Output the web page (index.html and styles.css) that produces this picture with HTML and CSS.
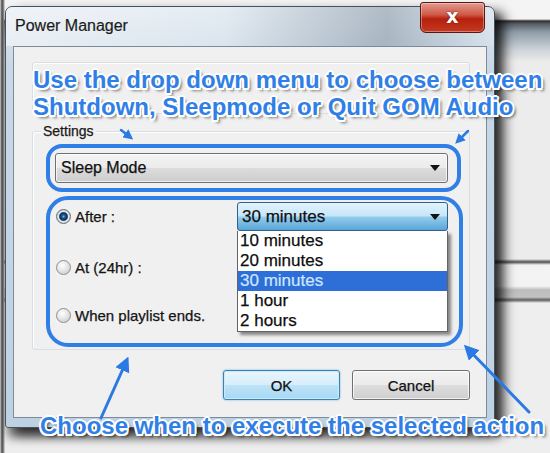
FILE: index.html
```html
<!DOCTYPE html>
<html lang="en">
<head>
    <meta charset="UTF-8">
    <title>Power Manager</title>
    <link rel="stylesheet" href="styles.css">
</head>
<body>
    <div class="desk">
        <div class="window">
            <div class="titlebar">
                <span class="title">Power Manager</span>
                <a class="close" href="javascript:;">x</a>
            </div>
            <div class="client">
                <div class="group upper"></div>
                <div class="group settings">
                    <span class="legend">Settings</span>
                    <div class="combo mode">
                        <span>Sleep Mode</span>
                        <i class="caret"></i>
                    </div>
                    <div class="options">
                        <div class="radios">
                            <label class="radio checked"><i></i>After :</label>
                            <label class="radio"><i></i>At (24hr) :</label>
                            <label class="radio"><i></i>When playlist ends.</label>
                        </div>
                        <div class="picker">
                            <div class="combo open">
                                <span>30 minutes</span>
                                <i class="caret"></i>
                            </div>
                            <ul class="list">
                                <li>10 minutes</li>
                                <li>20 minutes</li>
                                <li class="active">30 minutes</li>
                                <li>1 hour</li>
                                <li>2 hours</li>
                            </ul>
                        </div>
                    </div>
                </div>
                <div class="buttons">
                    <button class="btn default">OK</button>
                    <button class="btn">Cancel</button>
                </div>
            </div>
        </div>

        <!-- annotation marks drawn over the dialog -->
        <svg class="marks" width="550" height="453" viewBox="0 0 550 453">
            <defs>
                <marker id="head" viewBox="0 0 10 10" refX="6" refY="5" markerWidth="4" markerHeight="4" orient="auto">
                    <path d="M0 0L10 5L0 10z" fill="#2b79e2"/>
                </marker>
                <marker id="bighead" viewBox="0 0 10 10" refX="6" refY="5" markerWidth="5" markerHeight="5" orient="auto">
                    <path d="M0 0L10 5L0 10z" fill="#2b79e2"/>
                </marker>
            </defs>
            <g fill="none" stroke="#2f7fe6" stroke-width="4">
                <rect x="48" y="146" width="411" height="44" rx="14"/>
                <rect x="48" y="198" width="413" height="147" rx="20"/>
            </g>
            <g stroke="#2b79e2" stroke-width="2.5" stroke-linecap="round" marker-end="url(#head)">
                <line x1="121" y1="130" x2="130" y2="137"/>
                <line x1="468" y1="131" x2="458" y2="141"/>
            </g>
            <g stroke="#2b79e2" stroke-width="3" stroke-linecap="round" marker-end="url(#bighead)">
                <line x1="101" y1="418" x2="126" y2="362"/>
                <line x1="529" y1="412" x2="468" y2="349"/>
            </g>
        </svg>
        <p class="note top">Use the drop down menu to choose between<br>Shutdown, Sleepmode or Quit GOM Audio</p>
        <p class="note bottom">Choose when to execute the selected action</p>
    </div>
</body>
</html>
```

FILE: styles.css
```css
* {
    padding: 0;
    margin: 0;
    box-sizing: border-box;
}

body {
    width: 550px;
    height: 453px;
    overflow: hidden;
    font-family: "Liberation Sans", Arial, sans-serif;
    background: #e9e9e9;
}

/* desktop behind the dialog */
.desk {
    position: relative;
    width: 550px;
    height: 453px;
    padding: 6px 0 0 5px;
    background:
        linear-gradient(to right, #d8d8d8 0, #4a4a4a 2px, #9a9a9a 4px, transparent 5px),
        linear-gradient(to bottom, #f4f4f4 0, #f4f4f4 19px, #2e2e2e 21px, #5a5f66 24px, #8f9ca8 32px, #cdd4da 50px, #ececec 62px, #ececec 259px, #4e4e4e 262px, #f3f3f3 265px, #f3f3f3 286px, #bcbcbc 290px, #c4c4c4 297px, #5e5e5e 300px, #eeeeee 303px, #eeeeee 100%);
}

.window {
    width: 490px;
    height: 422px;
    padding: 0 7px 8px;
    border: 1px solid #46525e;
    border-radius: 7px 7px 3px 3px;
    background: linear-gradient(to bottom, #dfe8f0 0, #c9d8e6 60px, #bed1e3 100%);
    box-shadow: 9px 6px 12px rgba(0, 0, 0, .75), 2px 10px 10px rgba(0, 0, 0, .4);
}

.titlebar {
    display: flex;
    justify-content: space-between;
    align-items: flex-start;
    height: 39px;
    margin: 0 -7px;
    padding: 0 9px;
    background: linear-gradient(to right, rgba(255, 255, 255, .5) 0, rgba(255, 255, 255, .2) 45%, rgba(90, 105, 120, .35) 78%, rgba(255, 255, 255, .1) 100%);
    border-radius: 6px 6px 0 0;
}

.title {
    margin-top: 10px;
    font-size: 16px;
    line-height: 18px;
    color: #1c1c1c;
    -webkit-text-stroke: .2px #1c1c1c;
}

.close {
    width: 65px;
    height: 31px;
    margin-top: -5px;
    border: 1px solid #5b1610;
    border-radius: 3px 3px 6px 6px;
    background: linear-gradient(to bottom, #e29a8f 0, #cf5a48 40%, #b5200d 55%, #c43a22 100%);
    box-shadow: inset 0 0 0 1px rgba(255, 255, 255, .35);
    color: #fff;
    font: bold 19px/26px "DejaVu Sans", sans-serif;
    text-align: center;
    text-decoration: none;
    text-shadow: 0 0 2px #5b1610;
}

.client {
    height: 372px;
    padding: 15px 16px 0 18px;
    border: 1px solid #7b8b99;
    background: #f0f0f0;
    -webkit-text-stroke: .25px #111;
}

.group {
    border: 1px solid #d5dfe5;
    border-radius: 3px;
    box-shadow: inset 1px 1px 0 #fff;
}

.upper {
    height: 52px;
}

.settings {
    margin-top: 17px;
    padding: 0 21px 17px 22px;
}

.legend {
    display: block;
    width: fit-content;
    margin: -9px 0 0 -14px;
    padding: 0 2px;
    font-size: 14px;
    line-height: 16px;
    color: #1a1a1a;
    background: #f0f0f0;
}

.combo {
    display: flex;
    align-items: center;
    justify-content: space-between;
    border: 1px solid #707070;
    border-radius: 3px;
    color: #111;
}

.combo .caret {
    width: 0;
    height: 0;
    margin-right: 7px;
    border-left: 5px solid transparent;
    border-right: 5px solid transparent;
    border-top: 6px solid #111;
}

.mode {
    height: 30px;
    margin-top: 14px;
    padding-left: 5px;
    font-size: 16px;
    background: linear-gradient(to bottom, #f4f4f4 0, #ebebeb 50%, #dcdcdc 51%, #cdcdcd 100%);
    box-shadow: inset 0 0 0 1px rgba(255, 255, 255, .7);
}

.options {
    display: flex;
    margin-top: 19px;
}

.radios {
    width: 183px;
}

.radio {
    display: flex;
    align-items: center;
    gap: 4px;
    height: 29px;
    font-size: 15px;
    color: #151515;
}

.radio:nth-child(2) {
    margin-top: 22px;
}

.radio:nth-child(3) {
    margin-top: 19px;
}

.radio i {
    width: 15px;
    height: 15px;
    margin-left: 1px;
    border: 1px solid #8c8f91;
    border-radius: 50%;
    background: radial-gradient(circle at 40% 35%, #ffffff 0, #e6e6e6 45%, #c4c4c4 100%);
}

.radio.checked i {
    border-color: #5e7488;
    background: radial-gradient(circle 6.5px at 50% 50%, #73b8ea 0, #1d5b98 1.6px, #0d2b50 3.8px, #8c9aa6 4.5px, #eaeaea 5px, #c8c8c8 6.5px);
}

.picker {
    width: 212px;
}

.open {
    height: 29px;
    padding-left: 4px;
    font-size: 17px;
    border-color: #2c628b;
    background: linear-gradient(to bottom, #e4f3fc 0, #c6e6f8 48%, #93cdee 52%, #5aa4d6 100%);
}

.list {
    width: 211px;
    list-style: none;
    border: 1px solid #646464;
    border-top: 0;
    background: #fff;
    box-shadow: 3px 3px 3px rgba(0, 0, 0, .45);
}

.list li {
    height: 20px;
    padding-left: 2px;
    font-size: 17px;
    line-height: 20px;
    color: #0d0d0d;
}

.list li.active {
    background: #2d6fd6;
    color: #cfe6ff;
    -webkit-text-stroke: .2px #cfe6ff;
}

.buttons {
    display: flex;
    justify-content: flex-end;
    gap: 12px;
    margin-top: 20px;
}

.btn {
    width: 118px;
    height: 30px;
    border: 1px solid #707070;
    border-radius: 3px;
    font-family: "Liberation Sans", Arial, sans-serif;
    font-size: 15px;
    color: #111;
    background: linear-gradient(to bottom, #f2f2f2 0, #ebebeb 50%, #dddddd 51%, #cfcfcf 100%);
    box-shadow: inset 0 0 0 1px rgba(255, 255, 255, .75);
}

.btn.default {
    width: 117px;
    border-color: #3c7fb1;
    background: linear-gradient(to bottom, #e9f5fd 0, #d6eefb 50%, #bde3f8 51%, #a7d7f3 100%);
    box-shadow: inset 0 0 0 1px #c9ecfd, 0 0 2px #5eb0e6;
}

/* annotations over the screenshot */
.marks {
    position: absolute;
    left: 0;
    top: 0;
}

.note {
    position: absolute;
    font-weight: bold;
    font-size: 24px;
    line-height: 27px;
    color: #2f7fe6;
    white-space: nowrap;
    text-shadow: -2px 0 #fff, 2px 0 #fff, 0 -2px #fff, 0 2px #fff,
        -1.5px -1.5px #fff, 1.5px -1.5px #fff, -1.5px 1.5px #fff, 1.5px 1.5px #fff,
        3px 3px 3px rgba(0, 0, 0, .55);
}

.note.top {
    left: 33px;
    top: 66px;
}

.note.bottom {
    left: 40px;
    top: 412px;
}
```
